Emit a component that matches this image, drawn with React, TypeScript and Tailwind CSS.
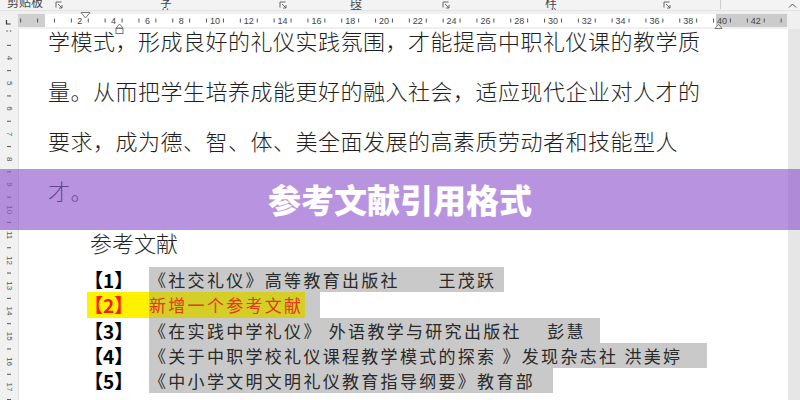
const U = 16.9;
const O = 46;
const topNums = Array.from({ length: 21 }, (_, i) => (i + 1) * 2);
const topTicks = Array.from({ length: 46 }, (_, i) => O + (i - 2 + 0.5) * U);

const VU = 25.3;
const sideNums = Array.from({ length: 14 }, (_, i) => i + 4);
const sideTicks = Array.from({ length: 15 }, (_, i) => 58 + (i - 0.5) * VU - 29);

const Launcher = () => (
  <svg width="8" height="8" viewBox="0 0 8 8" className="block">
    <path d="M1 6.5V1H6.5" fill="none" stroke="#666" strokeWidth="1" />
    <path d="M3 3L7 7M7 4V7H4" fill="none" stroke="#666" strokeWidth="1" />
  </svg>
);

const TopRuler = () => (
  <svg width="800" height="18" viewBox="0 0 800 18" className="block overflow-visible">
    <rect x="18" y="3" width="27" height="13" fill="#cfcfcf" />
    <rect x="45" y="3" width="671" height="13" fill="#ffffff" />
    <rect x="716" y="3" width="71" height="13" fill="#cbcbcb" />
    {topTicks.map((x) => (
      <line key={x} x1={x} y1="7.5" x2={x} y2="11.5" stroke="#555" strokeWidth="1" />
    ))}
    {topNums.map((n) => (
      <text
        key={n}
        x={O + n * U}
        y="12.5"
        fontSize="9"
        textAnchor="middle"
        fill="#444"
        fontFamily="Liberation Sans, sans-serif"
      >
        {n}
      </text>
    ))}
    <path d="M6.5 9V13H10.5" fill="none" stroke="#333" strokeWidth="1.2" />
    <path d="M81 1.5H90L85.5 7Z" fill="#fff" stroke="#777" strokeWidth="1" />
    <path d="M116 17L119.5 13L123 17Z" fill="#fff" stroke="#777" strokeWidth="1" />
    <rect x="116" y="17.5" width="7" height="5" fill="#fff" stroke="#777" strokeWidth="1" />
    <path d="M715 17.5L718.5 13.5L722 17.5Z" fill="#fff" stroke="#777" strokeWidth="1" />
  </svg>
);

const SideRuler = () => (
  <svg width="19" height="371" viewBox="0 0 19 371" className="block">
    <circle cx="7" cy="2" r="0.8" fill="#666" />
    <circle cx="10.5" cy="2" r="0.8" fill="#666" />
    {sideTicks.map((y) => (
      <line key={y} x1="7" y1={y} x2="11" y2={y} stroke="#555" strokeWidth="1" />
    ))}
    {sideNums.map((n) => {
      const y = 58 + (n - 4) * VU - 29;
      return (
        <text
          key={n}
          x="9"
          y={y}
          fontSize="8"
          textAnchor="middle"
          dominantBaseline="central"
          fill="#555"
          fontFamily="Liberation Sans, sans-serif"
          transform={`rotate(90 9 ${y})`}
        >
          {n}
        </text>
      );
    })}
  </svg>
);

const refs = [
  { n: "3", text: "《在实践中学礼仪》 外语教学与研究出版社　 彭慧", w: "w-[451px]" },
  { n: "4", text: "《关于中职学校礼仪课程教学模式的探索 》发现杂志社 洪美婷", w: "w-[558px]" },
  { n: "5", text: "《中小学文明文明礼仪教育指导纲要》教育部", w: "w-[404px]" },
];

export default function App() {
  return (
    <div className="relative w-[800px] h-[400px] overflow-hidden bg-[#f0f0f0] font-['Noto_Sans_CJK_SC',sans-serif]">
      {/* ribbon group labels */}
      <div className="flex items-start h-[11px] bg-[#f3f3f3] border-b border-[#e3e3e3] overflow-hidden text-[12px] leading-[12px] text-[#444]">
        <span className="ml-[7px] w-[38px] shrink-0 -mt-[4px]">剪贴板</span>
        <span className="ml-[10px] mt-[1px] shrink-0"><Launcher /></span>
        <span className="ml-[97px] w-[22px] shrink-0 -mt-[4px]">字体</span>
        <span className="ml-[97px] mt-[1px] shrink-0"><Launcher /></span>
        <span className="ml-[63px] w-[22px] shrink-0 -mt-[4px]">段落</span>
        <span className="ml-[70px] mt-[1px] shrink-0"><Launcher /></span>
        <span className="ml-[95px] w-[22px] shrink-0 -mt-[4px]">样式</span>
        <span className="ml-[96px] mt-[1px] shrink-0"><Launcher /></span>
        <span className="ml-[49px] w-px h-[9px] bg-[#cfcfcf] shrink-0" />
        <span className="ml-[67px] mt-[3px] shrink-0">
          <svg width="9" height="5" viewBox="0 0 9 5" className="block">
            <path d="M1 4.5L4.5 1L8 4.5" fill="none" stroke="#555" strokeWidth="1" />
          </svg>
        </span>
      </div>

      {/* horizontal ruler */}
      <div className="relative z-10 h-[18px]">
        <TopRuler />
      </div>

      {/* document area */}
      <div className="flex h-[371px]">
        <div className="w-[19px] shrink-0 bg-[#f1f1f1] border-r border-[#dedede]">
          <SideRuler />
        </div>
        <div className="flex-1 bg-white overflow-hidden">
          <div className="-mt-[14px] pl-[29px] text-[22px] leading-[50px] tracking-[0.5px] font-light text-[#1f1f1f] whitespace-nowrap">
            <p>学模式，形成良好的礼仪实践氛围，才能提高中职礼仪课的教学质</p>
            <p>量。从而把学生培养成能更好的融入社会，适应现代企业对人才的</p>
            <p>要求，成为德、智、体、美全面发展的高素质劳动者和技能型人</p>
            <p>才。</p>
            <p className="pl-[42px] mt-[2px] tracking-normal">参考文献</p>
          </div>

          <div className="ml-[68px] text-[17px] leading-[25px] tracking-[2.3px] text-[#2a2a2a] whitespace-nowrap">
            <div className="flex h-[25px]">
              <div className="w-[62px] shrink-0 text-[19px] font-bold text-black tracking-normal">
                <span className="-ml-[3px]">【1】</span>
              </div>
              <div className="w-[355px] bg-[#c9c9c9]">《社交礼仪》高等教育出版社　　王茂跃</div>
            </div>
            <div className="flex h-[26px] leading-[26px]">
              <div className="w-[62px] shrink-0 bg-[#fff200] text-[19px] font-bold text-[#ff1a00] tracking-normal">
                <span className="-ml-[3px]">【2】</span>
              </div>
              <div className="w-[171px] bg-[#c9c9c9]">
                <div className="w-[156px] bg-[#d5ce26] text-[#e0381a]">新增一个参考文献</div>
              </div>
            </div>
            {refs.map((r) => (
              <div key={r.n} className="flex h-[25px]">
                <div className="w-[62px] shrink-0 text-[19px] font-bold text-black tracking-normal">
                  <span className="-ml-[3px]">【{r.n}】</span>
                </div>
                <div className={`${r.w} bg-[#c9c9c9]`}>{r.text}</div>
              </div>
            ))}
          </div>
        </div>
        <div className="w-[12px] shrink-0 bg-[#e6e6e6]" />
      </div>

      {/* title banner */}
      <div className="absolute left-0 right-0 top-[169px] h-[61px] z-20 flex items-center justify-center bg-[rgba(144,88,206,0.64)]">
        <h1 className="text-white text-[33px] leading-none font-black">参考文献引用格式</h1>
      </div>
    </div>
  );
}
